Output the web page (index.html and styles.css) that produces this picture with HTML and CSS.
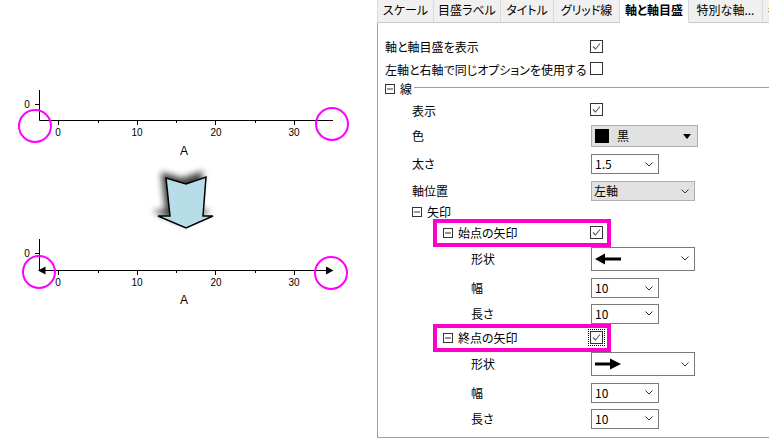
FILE: index.html
```html
<!DOCTYPE html>
<html lang="ja">
<head>
<meta charset="utf-8">
<title>軸と軸目盛</title>
<link rel="stylesheet" href="styles.css">
</head>
<body>
<div class="page">
  <div class="canvas">
    <svg class="graphs" width="377" height="439" viewBox="0 0 377 439">
      <defs>
        <filter id="sh" x="-50%" y="-50%" width="200%" height="200%">
          <feDropShadow dx="-4" dy="-5" stdDeviation="3" flood-color="#000" flood-opacity="0.75"/>
        </filter>
      </defs>
      <g class="axis">
        <path d="M39.5 90 V120.5 H333"/>
        <path d="M35 104.5 H39.5"/>
        <path d="M58.5 120.5 V125 M137.5 120.5 V125 M215.5 120.5 V125 M294.5 120.5 V125"/>
        <path d="M98.5 120.5 V123 M176.5 120.5 V123 M255.5 120.5 V123"/>
      </g>
      <text class="tl" x="27" y="108" text-anchor="middle">0</text>
      <text class="tl" x="58" y="136" text-anchor="middle">0</text>
      <text class="tl" x="137" y="136" text-anchor="middle">10</text>
      <text class="tl" x="216" y="136" text-anchor="middle">20</text>
      <text class="tl" x="294" y="136" text-anchor="middle">30</text>
      <text class="al" x="184" y="155" text-anchor="middle">A</text>
      <circle class="mark" cx="35" cy="126" r="16"/>
      <circle class="mark" cx="332" cy="124" r="16"/>

      <polygon class="big-arrow" points="166,178 186,184 206,177 203,216 213,216 186,228 158,216 170,216" filter="url(#sh)"/>

      <g class="axis">
        <path d="M39.5 239 V270.5 H328"/>
        <path d="M35 253.5 H39.5"/>
        <path d="M58.5 270.5 V275 M137.5 270.5 V275 M215.5 270.5 V275 M294.5 270.5 V275"/>
        <path d="M98.5 270.5 V273 M176.5 270.5 V273 M255.5 270.5 V273"/>
      </g>
      <polygon class="head" points="38,270.5 45.5,266.5 45.5,274.5"/>
      <polygon class="head" points="333.5,270.5 326,266.5 326,274.5"/>
      <text class="tl" x="27" y="257" text-anchor="middle">0</text>
      <text class="tl" x="58" y="286" text-anchor="middle">0</text>
      <text class="tl" x="137" y="286" text-anchor="middle">10</text>
      <text class="tl" x="216" y="286" text-anchor="middle">20</text>
      <text class="tl" x="294" y="286" text-anchor="middle">30</text>
      <text class="al" x="184" y="304" text-anchor="middle">A</text>
      <circle class="mark" cx="39" cy="272" r="16"/>
      <circle class="mark" cx="331" cy="273" r="16"/>
    </svg>
  </div>

  <div class="dialog">
    <div class="tabs">
      <div class="tab tab-first w57">スケール</div>
      <div class="tab w67">目盛ラベル</div>
      <div class="tab w53">タイトル</div>
      <div class="tab w66">グリッド線</div>
      <div class="tab active w69">軸と軸目盛</div>
      <div class="tab w74">特別な軸...</div>
      <div class="tab tab-last">参</div>
    </div>

    <div class="panel">
      <div class="row">
        <span class="lbl l0">軸と軸目盛を表示</span>
        <span class="cb"><svg width="13" height="13" viewBox="0 0 13 13"><rect x="0.5" y="0.5" width="12" height="12" class="cb-box"/><path d="M3 6.5 L5.5 9 L10 3.5" class="cb-tick"/></svg></span>
      </div>
      <div class="row">
        <span class="lbl l0">左軸と右軸で同じオプションを使用する</span>
        <span class="cb"><svg width="13" height="13" viewBox="0 0 13 13"><rect x="0.5" y="0.5" width="12" height="12" class="cb-box"/></svg></span>
      </div>
      <div class="group l0">
        <svg class="minus" width="10" height="10" viewBox="0 0 10 10"><rect x="0.5" y="0.5" width="9" height="9"/><path d="M2 5 H8"/></svg>
        <span class="lbl">線</span>
        <span class="rule"></span>
      </div>
      <div class="row">
        <span class="lbl l1">表示</span>
        <span class="cb"><svg width="13" height="13" viewBox="0 0 13 13"><rect x="0.5" y="0.5" width="12" height="12" class="cb-box"/><path d="M3 6.5 L5.5 9 L10 3.5" class="cb-tick"/></svg></span>
      </div>
      <div class="row">
        <span class="lbl l1">色</span>
        <span class="dd dd-color">
          <span class="swatch-wrap"><span class="swatch"></span><span class="dd-text">黒</span></span>
          <svg width="8" height="5" viewBox="0 0 8 5"><polygon points="0,0 8,0 4,5" fill="#000"/></svg>
        </span>
      </div>
      <div class="row">
        <span class="lbl l1">太さ</span>
        <span class="dd combo-sm">
          <span class="dd-text">1.5</span>
          <svg class="chev" width="8" height="5" viewBox="0 0 8 5"><polyline points="0.5,0.5 4,4 7.5,0.5"/></svg>
        </span>
      </div>
      <div class="row">
        <span class="lbl l1">軸位置</span>
        <span class="dd dd-grey">
          <span class="dd-text">左軸</span>
          <svg class="chev" width="8" height="5" viewBox="0 0 8 5"><polyline points="0.5,0.5 4,4 7.5,0.5"/></svg>
        </span>
      </div>
      <div class="group l1">
        <svg class="minus" width="10" height="10" viewBox="0 0 10 10"><rect x="0.5" y="0.5" width="9" height="9"/><path d="M2 5 H8"/></svg>
        <span class="lbl">矢印</span>
      </div>
      <div class="row hl">
        <span class="lbl"><svg class="minus" width="10" height="10" viewBox="0 0 10 10"><rect x="0.5" y="0.5" width="9" height="9"/><path d="M2 5 H8"/></svg>始点の矢印</span>
        <span class="cb"><svg width="13" height="13" viewBox="0 0 13 13"><rect x="0.5" y="0.5" width="12" height="12" class="cb-box"/><path d="M3 6.5 L5.5 9 L10 3.5" class="cb-tick"/></svg></span>
      </div>
      <div class="row">
        <span class="lbl l3">形状</span>
        <span class="dd dd-white">
          <svg width="28" height="12" viewBox="0 0 28 12"><polygon points="0,6 10,0.5 10,11.5" fill="#000"/><rect x="9" y="4.5" width="17" height="3" fill="#000"/></svg>
          <svg class="chev" width="8" height="5" viewBox="0 0 8 5"><polyline points="0.5,0.5 4,4 7.5,0.5"/></svg>
        </span>
      </div>
      <div class="row">
        <span class="lbl l3">幅</span>
        <span class="dd combo-sm">
          <span class="dd-text">10</span>
          <svg class="chev" width="8" height="5" viewBox="0 0 8 5"><polyline points="0.5,0.5 4,4 7.5,0.5"/></svg>
        </span>
      </div>
      <div class="row">
        <span class="lbl l3">長さ</span>
        <span class="dd combo-sm">
          <span class="dd-text">10</span>
          <svg class="chev" width="8" height="5" viewBox="0 0 8 5"><polyline points="0.5,0.5 4,4 7.5,0.5"/></svg>
        </span>
      </div>
      <div class="row hl">
        <span class="lbl"><svg class="minus" width="10" height="10" viewBox="0 0 10 10"><rect x="0.5" y="0.5" width="9" height="9"/><path d="M2 5 H8"/></svg>終点の矢印</span>
        <span class="cb focus"><svg width="13" height="13" viewBox="0 0 13 13"><rect x="0.5" y="0.5" width="12" height="12" class="cb-box"/><path d="M3 6.5 L5.5 9 L10 3.5" class="cb-tick"/></svg></span>
      </div>
      <div class="row">
        <span class="lbl l3">形状</span>
        <span class="dd dd-white">
          <svg width="28" height="12" viewBox="0 0 28 12"><rect x="0" y="4.5" width="16" height="3" fill="#000"/><polygon points="26,6 15,0.5 15,11.5" fill="#000"/></svg>
          <svg class="chev" width="8" height="5" viewBox="0 0 8 5"><polyline points="0.5,0.5 4,4 7.5,0.5"/></svg>
        </span>
      </div>
      <div class="row">
        <span class="lbl l3">幅</span>
        <span class="dd combo-sm">
          <span class="dd-text">10</span>
          <svg class="chev" width="8" height="5" viewBox="0 0 8 5"><polyline points="0.5,0.5 4,4 7.5,0.5"/></svg>
        </span>
      </div>
      <div class="row">
        <span class="lbl l3">長さ</span>
        <span class="dd combo-sm">
          <span class="dd-text">10</span>
          <svg class="chev" width="8" height="5" viewBox="0 0 8 5"><polyline points="0.5,0.5 4,4 7.5,0.5"/></svg>
        </span>
      </div>
    </div>
  </div>
</div>
</body>
</html>
```

FILE: styles.css
```css
* { box-sizing: border-box; }
html, body { margin: 0; padding: 0; background: #fff; }
body {
  width: 769px;
  height: 439px;
  overflow: hidden;
  font-family: "Noto Sans CJK JP", "Liberation Sans", sans-serif;
  font-size: 12px;
  color: #000;
}
.page { display: flex; width: 769px; height: 439px; }

.canvas { width: 377px; flex: none; }
.graphs { display: block; }
.axis path { stroke: #000; stroke-width: 1; fill: none; }
.head { fill: #000; }
.tl { font-family: "Liberation Sans", Arial, sans-serif; font-size: 10px; fill: #000; }
.al { font-family: "Liberation Sans", Arial, sans-serif; font-size: 12px; fill: #000; }
.mark { fill: none; stroke: #ff00ff; stroke-width: 2; }
.big-arrow { fill: #b7dde8; stroke: #000; stroke-width: 1.5; stroke-linejoin: miter; }

.dialog { width: 392px; flex: none; display: flex; flex-direction: column; overflow: hidden; }
.tabs { display: flex; height: 23px; flex: none; }
.tab {
  flex: none;
  height: 23px;
  background: #f0f0f0;
  border-right: 1px solid #d9d9d9;
  border-bottom: 1px solid #c8c8c8;
  display: flex;
  align-items: center;
  justify-content: center;
  padding-bottom: 2px;
  white-space: nowrap;
  font-size: 12px;
  line-height: 1;
  font-feature-settings: "palt";
}
.tab-first { border-left: 1px solid #d9d9d9; }
.tab.active { background: #fff; border-bottom-color: #fff; font-weight: bold; }
.tab-last { flex: 1; justify-content: flex-start; padding-left: 5px; border-right: none; }
.w57 { width: 57px; }
.w67 { width: 67px; }
.w53 { width: 53px; }
.w66 { width: 66px; }
.w69 { width: 69px; }
.w74 { width: 74px; }

.panel {
  width: 392px;
  height: 415px;
  border-left: 1px solid #a0a0a0;
  border-bottom: 1px solid #a0a0a0;
  padding-top: 13px;
  display: grid;
  grid-template-rows: 22px 23px 15px 29px 22px 34px 20px 22px 20px 31px 28px 23px 23px 32px 25px 27px;
  align-content: start;
}
.row {
  display: grid;
  grid-template-columns: 212px auto;
  align-items: center;
  justify-items: start;
}
.lbl {
  white-space: nowrap;
  line-height: 1;
  font-feature-settings: "palt";
  display: flex;
  align-items: center;
}
.l0 { padding-left: 7px; }
.l1 { padding-left: 34px; }
.l3 { padding-left: 93px; }

.group { display: flex; align-items: center; }
.group .minus { margin-right: 5px; }
.rule { flex: 1; height: 0; border-top: 1px solid #a0a0a0; margin-left: 2px; margin-top: -2px; }

.minus { flex: none; display: block; }
.minus rect { fill: #fff; stroke: #333; stroke-width: 1; }
.minus path { stroke: #333; stroke-width: 1; fill: none; }

.cb { display: flex; width: 13px; height: 13px; margin-top: -2px; }
.cb svg { display: block; }
.cb-box { fill: #fff; stroke: #333; stroke-width: 1; }
.cb-tick { fill: none; stroke: #555; stroke-width: 1.1; }
.focus { outline: 1px dotted #000; outline-offset: 1px; }

.hl {
  margin-left: 59px;
  width: 170px;
  height: 20px;
  padding-left: 6px;
  grid-template-columns: 147px auto;
  outline: 4px solid #ff00cc;
  align-self: end;
}
.hl .minus { margin-right: 5px; }

.dd {
  display: flex;
  align-items: center;
  justify-content: space-between;
  margin-left: 1px;
  padding: 0 5px 0 3px;
  line-height: 1;
}
.dd-text { font-family: "Noto Sans CJK JP", "Liberation Sans", sans-serif; font-size: 12px; }
.chev { display: block; }
.chev polyline { fill: none; stroke: #333; stroke-width: 1; }

.dd-color {
  width: 107px;
  height: 22px;
  background: #e1e1e1;
  border: 1px solid #adadad;
  padding: 0 6px 0 3px;
}
.swatch-wrap { display: flex; align-items: center; }
.swatch { width: 14px; height: 14px; background: #000; margin-right: 8px; }

.combo-sm {
  width: 68px;
  height: 20px;
  background: #fff;
  border: 1px solid #7a7a7a;
}
.dd-grey {
  width: 104px;
  height: 20px;
  background: #e1e1e1;
  border: 1px solid #adadad;
  padding-left: 2px;
}
.dd-white {
  width: 104px;
  height: 24px;
  background: #fff;
  border: 1px solid #7a7a7a;
}
```
